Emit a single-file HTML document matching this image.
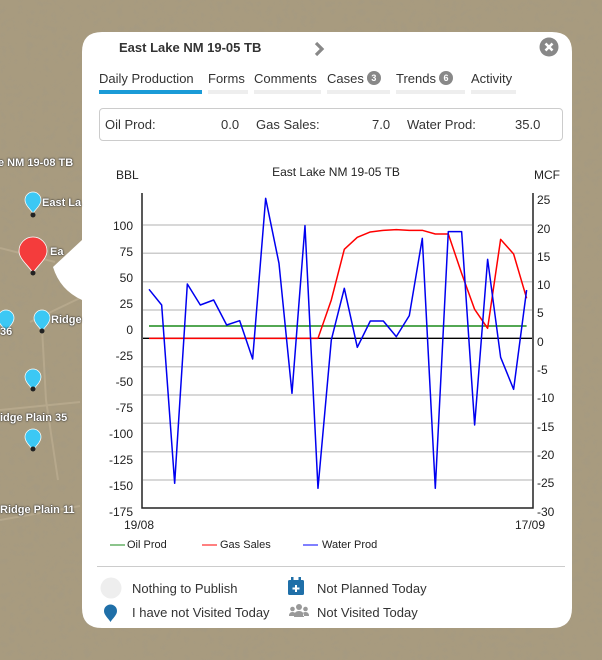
<!DOCTYPE html>
<html><head><meta charset="utf-8"><style>
*{margin:0;padding:0;box-sizing:border-box}
body{width:602px;height:660px;overflow:hidden;font-family:"Liberation Sans","DejaVu Sans",sans-serif;background:#a99c80;position:relative}
.t{position:absolute;white-space:nowrap}
.map{position:absolute;font-size:11px;font-weight:bold;color:#fff;text-shadow:0 0 2px #333,0 0 1px #000}
.tab{position:absolute;top:71px;font-size:13px;color:#333;padding-bottom:4px;border-bottom:4px solid #eee}
.badge{display:inline-block;width:14px;height:14px;border-radius:7px;background:#888;color:#fff;font-size:9px;font-weight:bold;text-align:center;line-height:14px;vertical-align:2px;margin-left:3px}
</style></head><body>
<svg width="602" height="660" style="position:absolute;left:0;top:0">
<defs><filter id="n"><feTurbulence baseFrequency="0.12" numOctaves="3" seed="3"/><feColorMatrix values="0 0 0 0 0.35 0 0 0 0 0.32 0 0 0 0 0.24 0 0 0 0.9 -0.25"/></filter></defs>
<rect width="602" height="660" fill="#a89b7f"/>
<rect width="602" height="660" filter="url(#n)" opacity="0.7"/>
<path d="M0 248 L55 262 M30 322 L80 298 M42 328 L46 400 L58 480 M0 410 L80 402 M0 520 L80 506" stroke="#bcae92" stroke-width="2" fill="none" opacity="0.7"/>
<path d="M102 32 H552 Q572 32 572 52 V608 Q572 628 552 628 H102 Q82 628 82 608 V300 Q60 290 53 267 L82 240 V52 Q82 32 102 32 Z" fill="#fff"/>
</svg>
<svg width="110" height="470" style="position:absolute;left:0;top:150px">
<path d="M25 50 a8 8 0 1 1 16 0 c0 5 -5 9 -8 13 c-3 -4 -8 -8 -8 -13z" fill="#3cc8f4" stroke="#fff" stroke-width="0.7"/>
<circle cx="33" cy="65" r="2.5" fill="#222"/>
<path d="M19 101 a14 14 0 1 1 28 0 c0 8 -9 14 -14 22 c-5 -8 -14 -14 -14 -22z" fill="#f43c3c" stroke="#fff" stroke-width="0.8"/>
<circle cx="33" cy="123" r="2.5" fill="#222"/>
<path d="M-2 168 a8 8 0 1 1 16 0 c0 5 -5 9 -8 13 c-3 -4 -8 -8 -8 -13z" fill="#3cc8f4" stroke="#fff" stroke-width="0.7"/>
<path d="M34 168 a8 8 0 1 1 16 0 c0 5 -5 9 -8 13 c-3 -4 -8 -8 -8 -13z" fill="#3cc8f4" stroke="#fff" stroke-width="0.7"/>
<circle cx="42" cy="181" r="2.5" fill="#222"/>
<path d="M25 227 a8 8 0 1 1 16 0 c0 5 -5 9 -8 13 c-3 -4 -8 -8 -8 -13z" fill="#3cc8f4" stroke="#fff" stroke-width="0.7"/>
<circle cx="33" cy="239" r="2.5" fill="#222"/>
<path d="M25 287 a8 8 0 1 1 16 0 c0 5 -5 9 -8 13 c-3 -4 -8 -8 -8 -13z" fill="#3cc8f4" stroke="#fff" stroke-width="0.7"/>
<circle cx="33" cy="299" r="2.5" fill="#222"/>
</svg>
<div class="map" style="left:-2px;top:157px">e NM 19-08 TB</div>
<div class="map" style="left:42px;top:197px">East La</div>
<div class="map" style="left:50px;top:246px">Ea</div>
<div class="map" style="left:0px;top:326px">36</div>
<div class="map" style="left:51px;top:314px">Ridge</div>
<div class="map" style="left:0px;top:412px">idge Plain 35</div>
<div class="map" style="left:0px;top:504px">Ridge Plain 11</div>
<div class="t" style="left:119px;top:40px;font-size:13px;font-weight:bold;color:#333">East Lake NM 19-05 TB</div>
<svg width="14" height="16" style="position:absolute;left:312px;top:41px"><path d="M4 2 L10 8 L4 14" stroke="#888" stroke-width="3.2" fill="none"/></svg>
<svg width="20" height="20" style="position:absolute;left:539px;top:37px"><circle cx="10" cy="10" r="9.5" fill="#888"/><path d="M6.5 6.5 L13.5 13.5 M13.5 6.5 L6.5 13.5" stroke="#fff" stroke-width="2.6"/></svg>
<div class="tab" style="left:99px;width:103px;border-color:#1a9bd7">Daily Production</div>
<div class="tab" style="left:208px;width:40px">Forms</div>
<div class="tab" style="left:254px;width:67px">Comments</div>
<div class="tab" style="left:327px;width:63px">Cases<span class="badge">3</span></div>
<div class="tab" style="left:396px;width:69px">Trends<span class="badge">6</span></div>
<div class="tab" style="left:471px;width:45px">Activity</div>
<div style="position:absolute;left:99px;top:108px;width:464px;height:33px;border:1px solid #ccc;border-radius:4px"></div>
<div class="t" style="left:105px;top:117px;font-size:13px;color:#333">Oil Prod:</div>
<div class="t" style="left:221px;top:117px;font-size:13px;color:#333">0.0</div>
<div class="t" style="left:256px;top:117px;font-size:13px;color:#333">Gas Sales:</div>
<div class="t" style="left:372px;top:117px;font-size:13px;color:#333">7.0</div>
<div class="t" style="left:407px;top:117px;font-size:13px;color:#333">Water Prod:</div>
<div class="t" style="left:515px;top:117px;font-size:13px;color:#333">35.0</div>
<svg width="602" height="660" style="position:absolute;left:0;top:0" font-family="Liberation Sans, sans-serif" font-size="12" fill="#222">
<text x="116" y="179">BBL</text><text x="534" y="179">MCF</text>
<text x="336" y="176" text-anchor="middle">East Lake NM 19-05 TB</text>
<g stroke="#ccc" stroke-width="1.5">
<line x1="143" x2="532" y1="225" y2="225"/><line x1="143" x2="532" y1="253.3" y2="253.3"/><line x1="143" x2="532" y1="281.7" y2="281.7"/><line x1="143" x2="532" y1="310" y2="310"/><line x1="143" x2="532" y1="366.7" y2="366.7"/><line x1="143" x2="532" y1="395" y2="395"/><line x1="143" x2="532" y1="423.3" y2="423.3"/><line x1="143" x2="532" y1="451.7" y2="451.7"/><line x1="143" x2="532" y1="480" y2="480"/>
</g>
<line x1="143" x2="532" y1="338.3" y2="338.3" stroke="#000" stroke-width="1.3"/>
<path d="M142 193 V508 H533 V193" stroke="#222" stroke-width="1.5" fill="none"/>
<g text-anchor="end">
<text x="133" y="230">100</text><text x="133" y="256">75</text><text x="133" y="282">50</text><text x="133" y="308">25</text><text x="133" y="334">0</text><text x="133" y="360">-25</text><text x="133" y="386">-50</text><text x="133" y="412">-75</text><text x="133" y="438">-100</text><text x="133" y="464">-125</text><text x="133" y="490">-150</text><text x="133" y="516">-175</text>
</g>
<g>
<text x="537" y="204">25</text><text x="537" y="233">20</text><text x="537" y="261">15</text><text x="537" y="289">10</text><text x="537" y="317">5</text><text x="537" y="346">0</text><text x="537" y="374">-5</text><text x="537" y="402">-10</text><text x="537" y="431">-15</text><text x="537" y="459">-20</text><text x="537" y="487">-25</text><text x="537" y="516">-30</text>
</g>
<text x="124" y="529">19/08</text><text x="515" y="529">17/09</text>
<g transform="translate(100,160) scale(0.3333)" fill="none" stroke-width="4.5" stroke-linejoin="round">
<line x1="147" x2="1280" y1="498" y2="498" stroke="#1a8a1a"/>
<polyline stroke="#f00" points="147,535 654,535 694,420 733,268 772,232 811,216 850,211 889,209 928,211 967,211 1006,222 1045,222 1085,340 1124,448 1163,505 1202,238 1241,282 1280,415"/>
<polyline stroke="#0000f0" points="147,388 185,435 224,970 262,372 301,435 341,420 380,495 419,482 458,597 497,115 537,310 576,700 615,197 654,985 694,540 733,385 772,562 811,483 850,483 889,530 928,467 967,235 1006,985 1045,215 1085,215 1124,795 1163,298 1202,592 1241,688 1280,390"/>
</g>
<g font-size="11">
<line x1="110" x2="125" y1="545" y2="545" stroke="#1a8a1a"/><text x="127" y="548">Oil Prod</text>
<line x1="202" x2="217" y1="545" y2="545" stroke="#f00"/><text x="220" y="548">Gas Sales</text>
<line x1="303" x2="318" y1="545" y2="545" stroke="#00f"/><text x="322" y="548">Water Prod</text>
</g>
<line x1="97" x2="565" y1="566.5" y2="566.5" stroke="#ccc"/>
<circle cx="111" cy="588" r="10.5" fill="#eee"/>
<path d="M104 611 a6.5 6.5 0 1 1 13 0 c0 4 -4 7 -6.5 11 c-2.5 -4 -6.5 -7 -6.5 -11z" fill="#1f6fa8"/>
<rect x="288" y="580" width="16" height="15" rx="1.5" fill="#1f6fa8"/><rect x="291" y="577" width="2.5" height="5" fill="#1f6fa8"/><rect x="298.5" y="577" width="2.5" height="5" fill="#1f6fa8"/>
<path d="M296 585 v7 M292.5 588.5 h7" stroke="#fff" stroke-width="2"/>
<g fill="#999"><circle cx="299" cy="607" r="3"/><circle cx="292.5" cy="609" r="2.3"/><circle cx="305.5" cy="609" r="2.3"/><path d="M294 617 q0 -6 5 -6 q5 0 5 6z M289 616 q0 -4 3.5 -4 q2 0 2.5 1 v3z M309 616 q0 -4 -3.5 -4 q-2 0 -2.5 1 v3z"/></g>
<g font-size="13" fill="#333">
<text x="132" y="593">Nothing to Publish</text>
<text x="132" y="617">I have not Visited Today</text>
<text x="317" y="593">Not Planned Today</text>
<text x="317" y="617">Not Visited Today</text>
</g>
</svg>
</body></html>
